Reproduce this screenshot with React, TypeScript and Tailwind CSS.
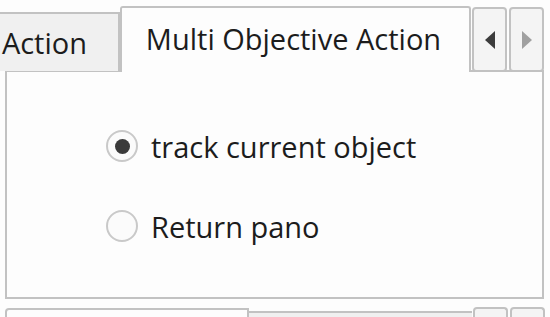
import React from "react";

const FONT = { fontFamily: '"Open Sans", "Noto Sans", "Liberation Sans", sans-serif' };

function ArrowButton({ dir, disabled }: { dir: "left" | "right"; disabled?: boolean }) {
  return (
    <div className="flex h-[65px] w-[35px] items-center justify-center rounded-[4px] border-2 border-[#c2c2c2] bg-[#f4f4f4]">
      <svg width="12" height="18" viewBox="0 0 12 18">
        {dir === "left" ? (
          <polygon points="11,0 11,18 1,9" fill={disabled ? "#a0a0a0" : "#3c3c3c"} />
        ) : (
          <polygon points="1,0 1,18 11,9" fill={disabled ? "#a0a0a0" : "#3c3c3c"} />
        )}
      </svg>
    </div>
  );
}

function Radio({ checked, label }: { checked?: boolean; label: string }) {
  return (
    <div className="flex items-center gap-[13px]">
      <div className="flex h-[32px] w-[32px] items-center justify-center rounded-full border-2 border-[#c9c9c9] bg-[#fbfbfb]">
        {checked && <div className="h-[15px] w-[15px] rounded-full bg-[#3a3a3a]" />}
      </div>
      <span className="text-[29px] leading-none text-[#1c1c1c]">{label}</span>
    </div>
  );
}

export default function App() {
  return (
    <div className="h-[317px] w-[550px] overflow-hidden bg-[#fdfdfd]" style={FONT}>
      <div className="flex items-end pt-[6px]">
        <div className="relative z-0 mb-[-1px] flex h-[59px] w-[120px] items-center justify-end overflow-hidden border-t-2 border-r-2 border-[#c2c2c2] bg-[#f0f0f0] pr-[31px]">
          <span className="shrink-0 text-[29px] leading-none text-[#1c1c1c]">Action</span>
        </div>
        <div className="relative z-10 mb-[-2px] flex h-[66px] w-[351px] items-center justify-center rounded-t-[3px] border-x-2 border-t-2 border-[#c2c2c2] bg-[#fdfdfd] pb-[4px] pr-[4px]">
          <span className="text-[29px] leading-none text-[#1c1c1c]">Multi Objective Action</span>
        </div>
        <div className="relative z-20 mb-[-2px] ml-[1px] flex gap-[2px] self-start pt-[1px]">
          <ArrowButton dir="left" />
          <ArrowButton dir="right" disabled />
        </div>
      </div>
      <div className="ml-[5px] h-[229px] w-[539px] border-2 border-[#c2c2c2] bg-[#fdfdfd]">
        <div className="flex flex-col gap-[48px] pl-[99px] pt-[58px]">
          <Radio checked label="track current object" />
          <Radio label="Return pano" />
        </div>
      </div>
      <div className="mt-[8px] flex items-start">
        <div className="ml-[5px] mt-[1px] h-[20px] w-[244px] rounded-tl-[4px] border-x-2 border-t-2 border-[#c2c2c2] bg-[#fdfdfd]" />
        <div className="mt-[4px] h-[20px] w-[223px] border-t-2 border-[#c2c2c2] bg-[#f0f0f0]" />
        <div className="ml-[1px] flex gap-[2px]">
          <div className="h-[20px] w-[35px] rounded-t-[4px] border-x-2 border-t-2 border-[#c2c2c2] bg-[#f4f4f4]" />
          <div className="h-[20px] w-[35px] rounded-t-[4px] border-x-2 border-t-2 border-[#c2c2c2] bg-[#f4f4f4]" />
        </div>
      </div>
    </div>
  );
}
